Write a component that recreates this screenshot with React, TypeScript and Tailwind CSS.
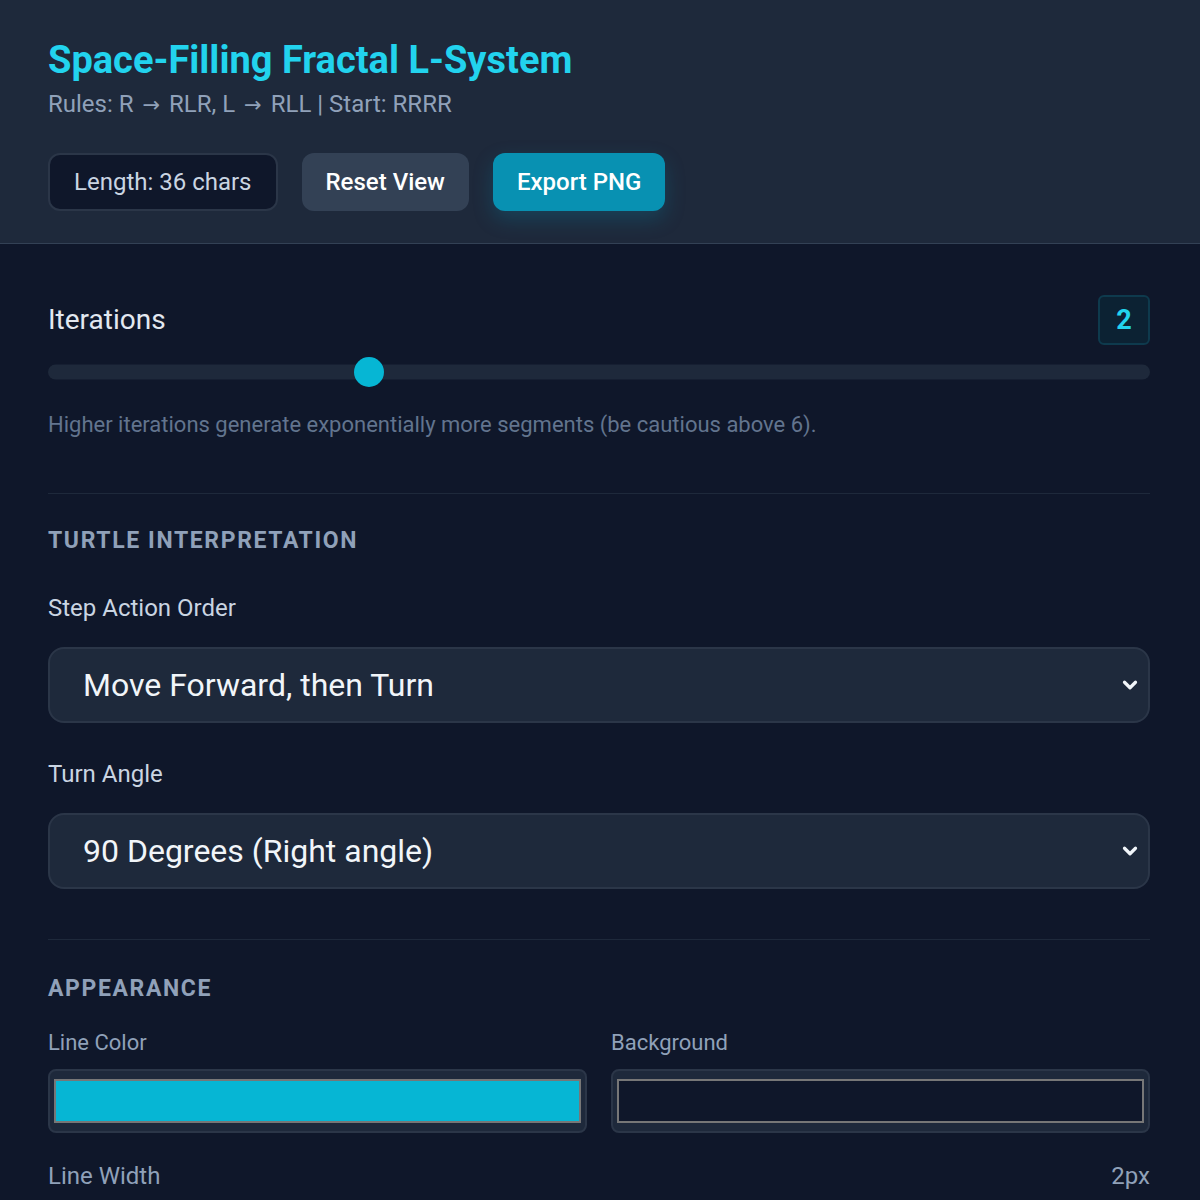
import { ChevronDown } from "lucide-react";

const font = { fontFamily: "Roboto, 'Noto Sans', sans-serif" };

function Arrow() {
  return <span className="mx-[3px] font-['DejaVu_Sans'] text-[21px] leading-none">→</span>;
}

function Select({ value }: { value: string }) {
  return (
    <div className="relative mt-[25px] flex h-[76px] items-center rounded-2xl border-2 border-[#2b3648] bg-[#1e293b] pl-[33px] pr-4">
      <span className="text-[32px] text-slate-100">{value}</span>
      <ChevronDown size={22} strokeWidth={3.5} className="absolute right-[7px] top-1/2 -translate-y-1/2 text-slate-100" />
    </div>
  );
}

function Swatch({ label, color }: { label: string; color: string }) {
  return (
    <div>
      <div className="text-[22px] leading-7 text-slate-400">{label}</div>
      <div className="mt-3 h-16 rounded-lg border-2 border-[#2b3648] bg-[#1e293b] px-1 py-2">
        <div className="h-full border-2 border-[#777]" style={{ background: color }} />
      </div>
    </div>
  );
}

export default function App() {
  const iterations = 2;
  const pct = iterations / 7;

  return (
    <div style={font} className="min-h-[1200px] bg-[#0f172a]">
      <header className="border-b border-[#334155] bg-[#1e293b] pb-8 pl-12 pr-[50px] pt-10">
        <h1 className="text-[38px] font-bold leading-10 text-[#22d3ee]">Space-Filling Fractal L-System</h1>
        <p className="mt-2.5 h-7 text-[24px] leading-7 text-slate-400">
          Rules: R <Arrow /> RLR, L <Arrow /> RLL | Start: RRRR
        </p>
        <div className="mt-[35px] flex gap-6">
          <div className="rounded-xl border-2 border-[#2b3648] bg-[#0f172a] px-6 py-[13px] text-[24px] leading-7 text-slate-300">Length: 36 chars</div>
          <button className="rounded-xl bg-[#334155] px-6 py-[15px] text-[24px] font-medium leading-7 text-white">Reset View</button>
          <button className="rounded-xl bg-[#0891b2] px-6 py-[15px] text-[24px] font-medium leading-7 text-white shadow-[0_8px_20px_rgba(8,145,178,0.25)]">Export PNG</button>
        </div>
      </header>

      <main className="pl-12 pr-[50px] pt-[51px]">
        <div className="flex items-center justify-between">
          <span className="text-[28px] text-slate-200">Iterations</span>
          <span className="flex h-[50px] w-[52px] items-center justify-center rounded-md border-2 border-[#0e3a4d] bg-[#0c2233] text-[27px] font-bold text-[#22d3ee]">{iterations}</span>
        </div>
        <div className="relative mt-3 h-[30px]">
          <div className="absolute inset-x-0 top-1/2 h-[15px] -translate-y-1/2 rounded-full bg-[#1e293b]" />
          <div
            className="absolute top-0 h-[30px] w-[30px] rounded-full bg-[#06b6d4]"
            style={{ left: `calc(${pct} * (100% - 30px))` }}
          />
        </div>
        <p className="mt-6 text-[22px] leading-7 text-slate-500">Higher iterations generate exponentially more segments (be cautious above 6).</p>

        <div className="mt-[54px] border-t border-[#1e293b]" />

        <h2 className="mt-[33px] text-[23px] font-bold uppercase leading-7 tracking-[0.07em] text-slate-400">Turtle Interpretation</h2>
        <div className="mt-[39px] text-[24px] leading-7 text-slate-300">Step Action Order</div>
        <Select value="Move Forward, then Turn" />
        <div className="mt-[37px] text-[24px] leading-7 text-slate-300">Turn Angle</div>
        <Select value="90 Degrees (Right angle)" />

        <div className="mt-[50px] border-t border-[#1e293b]" />

        <h2 className="mt-[35px] text-[23px] font-bold uppercase leading-7 tracking-[0.07em] text-slate-400">Appearance</h2>
        <div className="mt-[26px] grid grid-cols-2 gap-6">
          <Swatch label="Line Color" color="#06b6d4" />
          <Swatch label="Background" color="#0f172a" />
        </div>
        <div className="mt-[29px] flex justify-between text-[24px] leading-7 text-slate-400">
          <span>Line Width</span>
          <span>2px</span>
        </div>
      </main>
    </div>
  );
}
